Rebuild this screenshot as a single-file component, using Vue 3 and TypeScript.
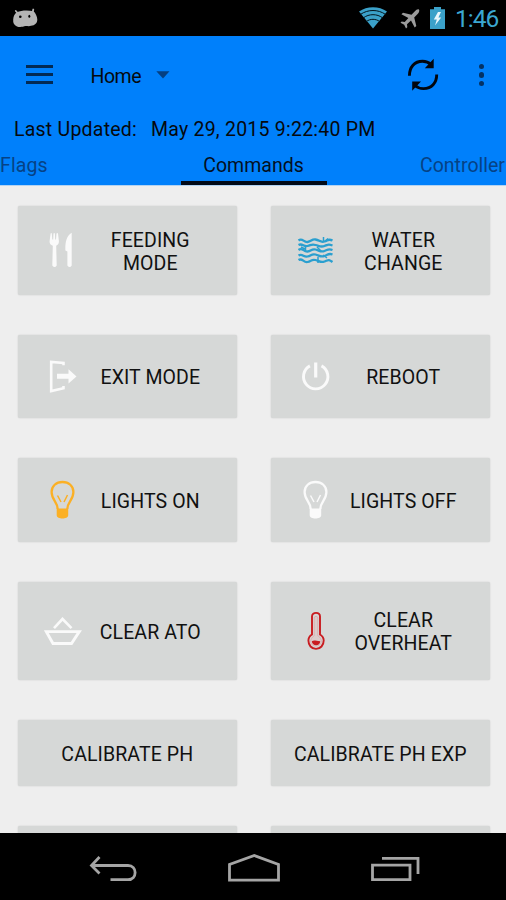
<script setup lang="ts">
interface Command {
  icon?: string
  lines: string[]
}
interface Row {
  size: string
  items: Command[]
}

const rows: Row[] = [
  {
    size: 'double',
    items: [
      { icon: 'food', lines: ['FEEDING', 'MODE'] },
      { icon: 'water', lines: ['WATER', 'CHANGE'] },
    ],
  },
  {
    size: 'single',
    items: [
      { icon: 'exit', lines: ['EXIT MODE'] },
      { icon: 'power', lines: ['REBOOT'] },
    ],
  },
  {
    size: 'single',
    items: [
      { icon: 'bulb-on', lines: ['LIGHTS ON'] },
      { icon: 'bulb-off', lines: ['LIGHTS OFF'] },
    ],
  },
  {
    size: 'tall',
    items: [
      { icon: 'basket', lines: ['CLEAR ATO'] },
      { icon: 'heat', lines: ['CLEAR', 'OVERHEAT'] },
    ],
  },
  {
    size: 'plain',
    items: [{ lines: ['CALIBRATE PH'] }, { lines: ['CALIBRATE PH EXP'] }],
  },
  {
    size: 'plain',
    items: [{ lines: [] }, { lines: [] }],
  },
]
</script>

<template>
  <div class="screen">
    <div class="status">
      <svg class="droid" width="28" height="22" viewBox="0 0 28 22">
        <path d="M3.800 4 6 6.500M21.300 2.500l-1 4" stroke="#b4b4b4" stroke-width="1.800" stroke-linecap="round" />
        <path d="M5 5.300C9 3.200 16 3 21.500 4.200c2 1.600 3.800 5.500 3.800 8.300 0 3.500-2.300 6-6.300 6.300-1.500.8-4 .2-5.500.3-2.500.8-6 1.400-8.500.4C2 18.200.9 16 1.200 12.500 1.400 9.500 2.500 6.500 5 5.300z" fill="#b4b4b4" />
        <circle cx="8.300" cy="9.700" r="1.300" /><ellipse cx="17.300" cy="9.200" rx="1" ry="1.500" />
      </svg>
      <div class="status-right">
        <svg class="wifi" width="28" height="22" viewBox="0 0 28 22">
          <path d="M0 4.500C8-1.200 20-1.200 28 4.500L14 21.500z" fill="#3ba1c9" />
          <path d="M1.500 7.400C9 2.200 19 2.200 26.500 7.400M4.300 10.900c5.700-4.300 13.700-4.300 19.400 0M7.300 14.500c4-2.900 9.400-2.900 13.400 0" fill="none" stroke="#02141c" stroke-width="1" />
        </svg>
        <svg class="plane" width="20" height="20" viewBox="0 0 20 20">
          <path d="M18.900.6c-1-.9-2.700.3-4 1.700L11.500 5.800 3 3.700 1.400 5.300l7 3.700-3.700 4-3-.4L.5 13.800l3.700 1.900L6 19.400l1.300-1.200-.3-3 4-3.700 3.700 7 1.600-1.600-2.100-8.400L17.600 5c1.300-1.400 2.200-3.400 1.300-4.400z" fill="#9c9c9c" />
        </svg>
        <svg class="battery" width="15" height="22" viewBox="0 0 15 22">
          <path d="M4 0h7v2.300h4V22H0V2.300h4z" fill="#3ba1c9" />
          <path d="M8 5 3.800 12.500h3L5 18.500 11.200 10.500H8.400L11 5z" fill="#e8f6fc" />
        </svg>
        <span class="clock">1:46</span>
      </div>
    </div>

    <header class="header">
      <div class="toolbar">
        <div class="menu"><i></i><i></i><i></i></div>
        <span class="home">Home</span>
        <svg class="caret" width="14" height="8" viewBox="0 0 14 8"><path d="M.3.2h13.200L7 7.600z" fill="#053f80" /></svg>
        <svg class="refresh" width="32" height="34" viewBox="0 0 32 34">
          <g fill="none" stroke="#02060d" stroke-width="2.900">
            <path d="M2.400 17.700C2.400 9 7.500 3.200 15.500 3.200c3.700 0 6.500 1.400 8.500 3.300" />
            <path d="M29.700 16.400c0 8.500-5.200 14.200-13.200 14.200-3.700 0-6.500-1.200-8.500-3.100" />
          </g>
          <path d="M26.700.8v9.500H17.800zM5.200 32.800V23.600H14z" fill="#02060d" />
        </svg>
        <div class="more"><i></i><i></i><i></i></div>
      </div>
      <div class="updated">
        <span class="label">Last Updated:</span>
        <span class="date">May 29, 2015 9:22:40 PM</span>
      </div>
      <nav class="tabs">
        <span class="tab flags">Flags</span>
        <span class="tab active">Commands</span>
        <span class="tab controller">Controller</span>
      </nav>
    </header>

    <main class="commands">
      <div v-for="(row, r) in rows" :key="r" class="row" :class="row.size">
        <button v-for="(cmd, c) in row.items" :key="c" class="command" :class="{ iconic: cmd.icon }">
          <svg v-if="cmd.icon" class="icon" width="38" height="40" viewBox="0 0 38 40">
            <g v-if="cmd.icon === 'food'" fill="#fafafa">
              <path d="M6.600 3.500q.8-1 1.200 0l.5 6h.9l.3-6q.8-1 1.400 0l.3 6h.8l.5-6q.8-1 1.500 0l.9 7.500c.2 2.500-1 4-2.700 4.700l.5 19.800q-2 3-4.400 0l.5-19.800C6.500 15 5.400 13.500 5.600 11z" />
              <path d="M27.700 2.800v32.700q-2 3-4.300 0V21.500l-2-1c-.3-7 .6-14.600 6.300-17.700z" />
            </g>
            <g v-else-if="cmd.icon === 'water'" fill="none" stroke="#2a9fcf" stroke-width="2.300">
              <path d="M1.500 10.500c4-3 5 2 9 1.500s4-3 8-2.500 5 3.500 9 2 4-3 8-1M1.500 15c4-2 5 2 9 1s4-2 8-1 5 2.500 9 1 4-2 8-.5M1.500 20c4-3 5 2 9 1.500s4-3 8-2 5 3 9 1.500 4-2.500 8-1M1.500 25.500c4-2.500 5 2 9 1s4-3 8-2 5 3 9 1.500 4-3 8-1.500M1.500 30c4-2.500 5 3 9 2s4-3 8-2 5 3 9 1.500 4-2.500 8 .5" />
              <path d="M26.500 7v5M31 8.500l-2 2M8.500 17v5M4 17l4 2M21 27v6M20 17l4 4M26 25l4 3" stroke-width="1.500" />
            </g>
            <g v-else-if="cmd.icon === 'exit'">
              <path d="M19.500 9.200V7L7.200 5.900v29.200l12.300-2.800v-2.200" fill="none" stroke="#fafafa" stroke-width="2.600" />
              <path d="M13 17.800h11.500v-4.500L32.500 20.500 24.500 27.500v-4.800H13z" fill="#fafafa" />
            </g>
            <g v-else-if="cmd.icon === 'power'" fill="none" stroke="#fafafa">
              <path d="M12.900 9.900a12.200 12.200 0 1 0 11.600 0" stroke-width="2.900" />
              <path d="M18.700 6.500v15" stroke-width="3.200" />
            </g>
            <g v-else-if="cmd.icon === 'bulb-on' || cmd.icon === 'bulb-off'" :class="cmd.icon">
              <path class="line" d="M13.700 29c0-7-6.100-9-6.100-17 0-6 4.600-10 10.900-10s10.900 4 10.900 10c0 8-6.100 10-6.100 17" stroke-width="2.300" />
              <path class="line" d="M13.500 15.500 17 22M23.500 15 20 22" stroke-width="1.500" />
              <path class="fill" d="M12.700 28.500h11.500v6.700c0 4.300-11.500 4.300-11.500 0z" />
            </g>
            <g v-else-if="cmd.icon === 'basket'" fill="none" stroke="#fafafa" stroke-width="2.600">
              <path d="M2.300 20.600h33L27.500 32.500H9z" stroke-width="2.900" />
              <path d="M10 17.200 18.500 8l9 9.200" />
            </g>
            <g v-else>
              <path d="M15 23.500V5.500c0-4.800 8-4.800 8 0v18c2.600 1.600 3.700 3.700 3.700 6 0 4.800-3.300 8.400-7.700 8.400s-7.600-3.600-7.600-8.400c0-2.400 1.200-4.500 3.600-6z" fill="none" stroke="#c91c20" stroke-width="1.900" />
              <path d="M17.200 6.300q1.800-2.500 3.600 0v18.500c6 3.200 4 10.300-1.800 10.300s-7.600-7.100-1.800-10.300z" fill="#dbcccb" stroke="#dc8f90" stroke-width=".5" />
              <path d="M14.800 30.300c2.500-1.600 4-.1 8.400 0 0 5.300-8 5.300-8.400 0z" fill="#c91c20" />
            </g>
          </svg>
          <span class="text"><span v-for="line in cmd.lines" :key="line">{{ line }}</span></span>
        </button>
      </div>
    </main>

    <footer class="navbar">
      <svg width="46" height="26" viewBox="0 0 46 26">
        <path d="M9.500 2 1.500 10.500l8 8M1.500 10.500H38c9.500 0 9.500 14.200 0 14.200H20.500" />
      </svg>
      <svg width="54" height="30" viewBox="0 0 54 30">
        <path d="M2.500 25.200V9.500L27.300.5 51.500 9.500v15.700z" />
      </svg>
      <svg width="49" height="26" viewBox="0 0 49 26">
        <path d="M1.500 10.200h37.500v14.500H1.500zM11 3.400h36v15.500" />
      </svg>
    </footer>
  </div>
</template>

<style>
body {
  margin: 0;
  overflow: hidden;
}
</style>

<style scoped>
.screen {
  width: 506px;
  height: 900px;
  display: flex;
  flex-direction: column;
  overflow: hidden;
  background: #eee;
  color: #06090d;
  font-family: Roboto, sans-serif;
  font-size: 19.5px;
}
.status {
  height: 36px;
  flex: none;
  display: flex;
  justify-content: space-between;
  align-items: flex-start;
  background: #000;
}
.droid {
  margin: 7px 0 0 12px;
}
.status-right {
  display: flex;
  padding-right: 8px;
}
.wifi {
  margin: 7px 13px 0 0;
}
.plane {
  margin: 9px 10px 0 0;
}
.battery {
  margin: 7px 10px 0 0;
}
.clock {
  width: 43px;
  color: #3ba7d1;
  font-size: 24.5px;
  line-height: 38px;
  letter-spacing: -1px;
  white-space: nowrap;
}
.header {
  height: 150px;
  flex: none;
  box-sizing: border-box;
  background: #0080fb;
  border-bottom: 1px solid #b3d3f2;
}
.toolbar {
  height: 78px;
  display: flex;
  align-items: center;
}
.menu {
  width: 27px;
  height: 19px;
  margin: 0 0 1px 26px;
  display: flex;
  flex-direction: column;
  justify-content: space-between;
}
.menu i {
  height: 3px;
  background: #032a54;
}
.home {
  width: 52px;
  margin: 2px 0 0 37.500px;
  letter-spacing: -0.5px;
}
.caret {
  margin-left: 13.500px;
}
.refresh {
  margin-left: auto;
}
.more {
  margin: 0 22px 0 40px;
  display: flex;
  flex-direction: column;
  gap: 3px;
}
.more i {
  width: 5.500px;
  height: 5.500px;
  border-radius: 50%;
  background: #053264;
}
.updated {
  height: 30px;
  line-height: 31px;
  display: flex;
  padding-left: 14px;
  letter-spacing: 0.23px;
  white-space: nowrap;
}
.label {
  width: 137px;
}
.tabs {
  height: 41px;
  line-height: 43px;
  display: flex;
  overflow: hidden;
  white-space: nowrap;
}
.tab {
  flex: none;
  color: #064285;
}
.flags {
  width: 180.500px;
  letter-spacing: 0.1px;
}
.active {
  width: 146px;
  box-sizing: border-box;
  border-bottom: 4px solid #020a18;
  color: #04101f;
  text-align: center;
}
.controller {
  margin-left: 93.500px;
}
.commands {
  flex: 1;
  min-height: 0;
  overflow: hidden;
  padding: 20px 16px 0 18px;
  display: flex;
  flex-direction: column;
  gap: 40px;
}
.row {
  flex: none;
  display: grid;
  grid-template-columns: 218.600px 218.600px;
  column-gap: 34.400px;
}
.double {
  height: 88.600px;
}
.single {
  height: 83.800px;
}
.tall {
  height: 97.800px;
}
.plain {
  height: 65.700px;
}
.command {
  border: 0;
  border-radius: 2px;
  background: #d6d8d7;
  box-shadow: 0 0 1.500px rgba(0, 0, 0, 0.2);
  color: #111;
  font: inherit;
  line-height: 23px;
  letter-spacing: 0.1px;
  padding: 0;
  display: flex;
  align-items: center;
}
.iconic {
  padding: 0 16px 0 26px;
}
.icon {
  flex: none;
  margin-right: -2px;
}
.text {
  flex: 1;
  display: flex;
  flex-direction: column;
  padding-top: 3px;
  text-align: center;
  white-space: nowrap;
}
.tall .text {
  padding-top: 2px;
}
.bulb-on {
  stroke: #fbb025;
  fill: #fbb025;
}
.bulb-off {
  stroke: #fafafa;
  fill: #fafafa;
}
.line {
  fill: none;
}
.fill {
  stroke: none;
}
.navbar {
  height: 67px;
  flex: none;
  background: #000;
  display: flex;
  justify-content: space-between;
  align-items: flex-start;
  padding: 22px 86px 0 90px;
  box-sizing: border-box;
}
.navbar svg {
  overflow: visible;
  fill: none;
  stroke: #a5a5a5;
  stroke-width: 2.800;
}
</style>
